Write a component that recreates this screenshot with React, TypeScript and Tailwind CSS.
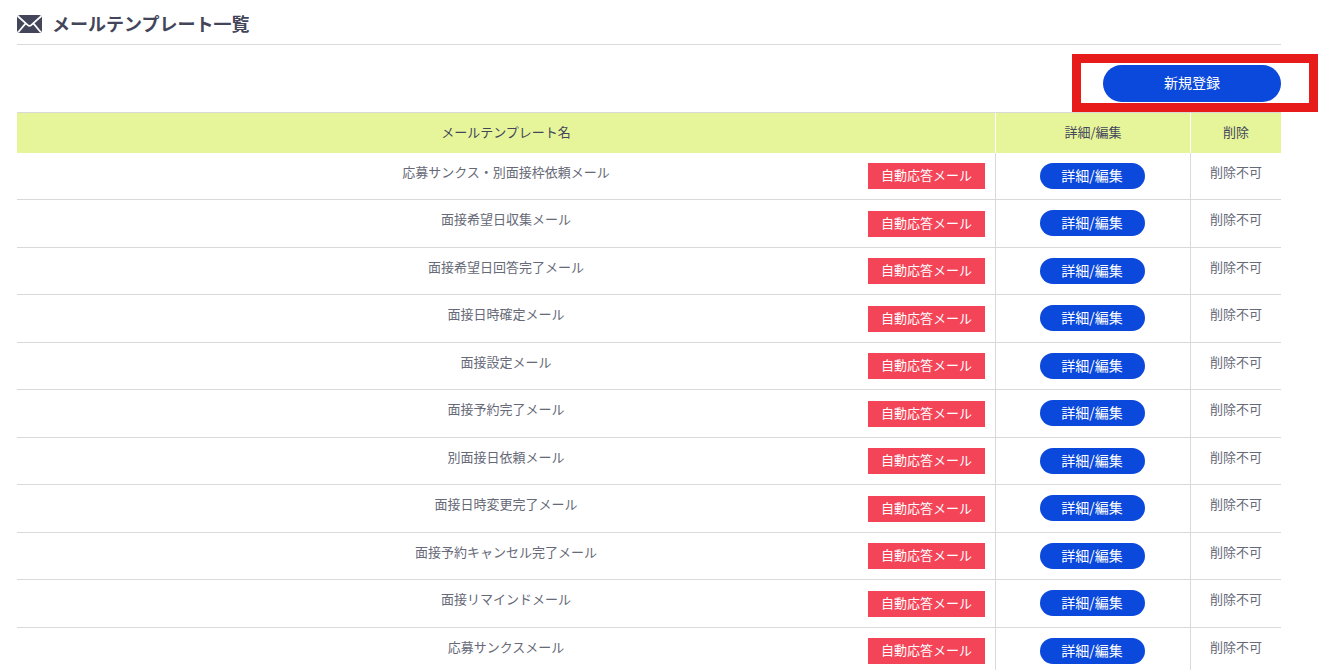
const templates = [
  '応募サンクス・別面接枠依頼メール',
  '面接希望日収集メール',
  '面接希望日回答完了メール',
  '面接日時確定メール',
  '面接設定メール',
  '面接予約完了メール',
  '別面接日依頼メール',
  '面接日時変更完了メール',
  '面接予約キャンセル完了メール',
  '面接リマインドメール',
  '応募サンクスメール',
];

function MailIcon() {
  return (
    <svg width="25" height="18" viewBox="0 0 25 18" aria-hidden="true">
      <rect width="25" height="18" rx="3" fill="#43465a" />
      <path
        d="M0.6 1 L10.8 10.2 Q12.5 11.6 14.2 10.2 L24.4 1 M1.2 17.2 L8.4 8.6 M23.8 17.2 L16.6 8.6"
        fill="none"
        stroke="#fff"
        strokeWidth="1.7"
      />
    </svg>
  );
}

function TemplateRow({ name }: { name: string }) {
  return (
    <tr className="group">
      <td className="h-[47px] border-b border-r border-[#d9d9dc] px-[10px] pt-[10px] align-top group-even:h-12">
        <div className="grid grid-cols-[1fr_auto_1fr] items-start">
          <span className="col-start-2 leading-[18px]">{name}</span>
          <span className="justify-self-end bg-[#f44458] px-[13px] pb-[2px] leading-6 text-white group-even:mt-px">
            自動応答メール
          </span>
        </div>
      </td>
      <td className="h-[47px] border-b border-r border-[#d9d9dc] pt-[10px] pr-[2px] text-center align-top group-even:h-12">
        <button
          type="button"
          className="mx-auto block h-[26px] w-[105px] rounded-full bg-[#0b48dc] pb-[2px] text-sm leading-6 text-white"
        >
          詳細/編集
        </button>
      </td>
      <td className="h-[47px] border-b border-[#d9d9dc] pt-[10px] text-center align-top leading-[18px] group-even:h-12">
        削除不可
      </td>
    </tr>
  );
}

export default function App() {
  return (
    <main className="h-screen overflow-hidden bg-white pr-[38px] pl-[17px] font-['Noto_Sans_CJK_JP',sans-serif] text-[13px] text-[#666977]">
      <header className="flex h-[45px] items-center gap-[10px] border-b border-[#d9d9dc] pt-1">
        <MailIcon />
        <h1 className="pb-[2px] text-lg font-bold text-[#43465a]">メールテンプレート一覧</h1>
      </header>

      <div className="flex justify-end pt-5 pb-[10px]">
        <div className="relative">
          <button
            type="button"
            className="block h-[37px] w-[178px] rounded-full bg-[#0b48dc] pb-[3px] text-sm text-white"
          >
            新規登録
          </button>
          <div className="pointer-events-none absolute -top-[11px] -right-[37px] -bottom-[10px] -left-[31px] border-[9px] border-[#e81b1b]" />
        </div>
      </div>

      <table className="w-full table-fixed border-separate border-spacing-0 border-t border-[#d9d9dc]">
        <colgroup>
          <col />
          <col className="w-[195px]" />
          <col className="w-[90px]" />
        </colgroup>
        <thead>
          <tr className="bg-[#e7f59a] text-[#43465a]">
            <th scope="col" className="h-10 border-r border-white p-0 pb-[2px] font-normal">メールテンプレート名</th>
            <th scope="col" className="h-10 border-r border-white p-0 pb-[2px] font-normal">詳細/編集</th>
            <th scope="col" className="h-10 p-0 pb-[2px] font-normal">削除</th>
          </tr>
        </thead>
        <tbody>
          {templates.map((name) => (
            <TemplateRow key={name} name={name} />
          ))}
        </tbody>
      </table>
    </main>
  );
}
